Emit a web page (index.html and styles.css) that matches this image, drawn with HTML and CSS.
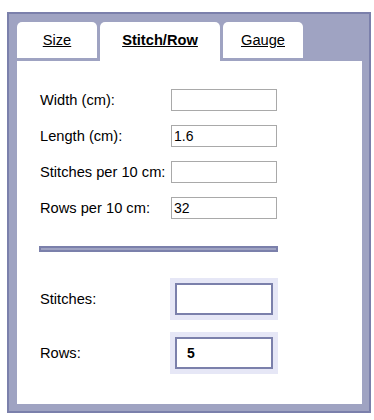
FILE: index.html
```html
<!DOCTYPE html>
<html lang="en">
<head>
    <meta charset="UTF-8">
    <title>Stitch/Row</title>
    <link rel="stylesheet" href="styles.css">
</head>
<body>
    <div class="calc">
        <div class="tabs">
            <a class="tab" href="#">Size</a>
            <a class="tab active" href="#">Stitch/Row</a>
            <a class="tab" href="#">Gauge</a>
        </div>
        <div class="panel">
            <div class="fields">
                <label for="width">Width (cm):</label>
                <input type="text" id="width">
                <label for="length">Length (cm):</label>
                <input type="text" id="length" value="1.6">
                <label for="stitches10">Stitches per 10 cm:</label>
                <input type="text" id="stitches10">
                <label for="rows10">Rows per 10 cm:</label>
                <input type="text" id="rows10" value="32">
            </div>
            <div class="divider"></div>
            <div class="results">
                <label for="stitches">Stitches:</label>
                <div class="result-box"><input type="text" id="stitches" readonly></div>
                <label for="rows">Rows:</label>
                <div class="result-box"><input type="text" id="rows" value="5" readonly></div>
            </div>
        </div>
    </div>
</body>
</html>
```

FILE: styles.css
```css
body {
    margin: 0;
    background-color: white;
    font-family: "Liberation Sans", Arial, sans-serif;
    font-size: 11pt;
    color: #000;
}
.calc {
    margin: 12px 0 0 7px;
    width: 345px;
    border: 2px solid #7b80ab;
    background-color: #9fa3c2;
    padding: 8px 7px 7px 8px;
}
.tabs {
    display: flex;
    align-items: flex-start;
    gap: 3px;
}
.tab {
    width: 80px;
    height: 36px;
    line-height: 36px;
    margin-bottom: 3px;
    background-color: white;
    border-radius: 5px 5px 0 0;
    text-align: center;
    color: #000;
    text-decoration: underline;
}
.tab.active {
    width: 120px;
    height: 39px;
    line-height: 36px;
    margin-bottom: 0;
    font-weight: bold;
}
.panel {
    background-color: white;
    padding: 28px 0 30px 23px;
}
.fields {
    display: grid;
    grid-template-columns: 131px 106px;
    row-gap: 14px;
    align-items: center;
}
.fields input {
    box-sizing: border-box;
    width: 106px;
    height: 22px;
    margin: 0;
    padding: 0 2px;
    border: 1px solid #a9a9a9;
    font-family: inherit;
    font-size: 14px;
    color: #000;
    outline: none;
}
.divider {
    width: 235px;
    height: 2px;
    margin: 27px 0 26px -1px;
    border: 2px solid #7b80ab;
    background-color: #9fa3c2;
}
.results {
    display: grid;
    grid-template-columns: 130px 108px;
    row-gap: 12px;
    align-items: center;
}
.result-box {
    background-color: #e6e7f6;
    padding: 5px;
}
.result-box input {
    box-sizing: border-box;
    display: block;
    width: 98px;
    height: 32px;
    margin: 0;
    padding: 0 10px;
    border: 2px solid #7b80ab;
    font-family: inherit;
    font-size: 14px;
    font-weight: bold;
    color: #000;
    outline: none;
}
```
